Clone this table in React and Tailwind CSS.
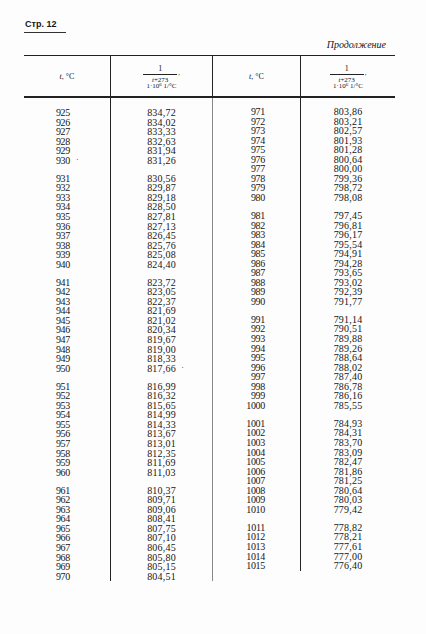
import React from "react";

const left = [
  [["925","834,72"],["926","834,02"],["927","833,33"],["928","832,63"],["929","831,94"],["930","831,26"]],
  [["931","830,56"],["932","829,87"],["933","829,18"],["934","828,50"],["935","827,81"],["936","827,13"],["937","826,45"],["938","825,76"],["939","825,08"],["940","824,40"]],
  [["941","823,72"],["942","823,05"],["943","822,37"],["944","821,69"],["945","821,02"],["946","820,34"],["947","819,67"],["948","819,00"],["949","818,33"],["950","817,66"]],
  [["951","816,99"],["952","816,32"],["953","815,65"],["954","814,99"],["955","814,33"],["956","813,67"],["957","813,01"],["958","812,35"],["959","811,69"],["960","811,03"]],
  [["961","810,37"],["962","809,71"],["963","809,06"],["964","808,41"],["965","807,75"],["966","807,10"],["967","806,45"],["968","805,80"],["969","805,15"],["970","804,51"]],
];

const right = [
  [["971","803,86"],["972","803,21"],["973","802,57"],["974","801,93"],["975","801,28"],["976","800,64"],["977","800,00"],["978","799,36"],["979","798,72"],["980","798,08"]],
  [["981","797,45"],["982","796,81"],["983","796,17"],["984","795,54"],["985","794,91"],["986","794,28"],["987","793,65"],["988","793,02"],["989","792,39"],["990","791,77"]],
  [["991","791,14"],["992","790,51"],["993","789,88"],["994","789,26"],["995","788,64"],["996","788,02"],["997","787,40"],["998","786,78"],["999","786,16"],["1000","785,55"]],
  [["1001","784,93"],["1002","784,31"],["1003","783,70"],["1004","783,09"],["1005","782,47"],["1006","781,86"],["1007","781,25"],["1008","780,64"],["1009","780,03"],["1010","779,42"]],
  [["1011","778,82"],["1012","778,21"],["1013","777,61"],["1014","777,00"],["1015","776,40"]],
];

function Half({ groups, first, second, tPad, topClass, dotT, dotV }) {
  return (
    <div className="flex flex-col">
      <div className={`grid ${first} ${topClass}`}>
        <div className="border-r border-[#222]"></div>
        <div className={second}></div>
      </div>
      {groups.map((g, gi) => (
        <React.Fragment key={gi}>
          {gi > 0 && (
            <div className={`grid ${first} h-[8.5px]`}>
              <div className="border-r border-[#222]"></div>
              <div className={second}></div>
            </div>
          )}
          {g.map((r) => (
            <div key={r[0]} className={`grid ${first} h-[9.55px] leading-[9.55px]`}>
              <div className={`border-r border-[#222] text-right ${tPad}`}>
                <span className="relative">
                  {r[0]}
                  {dotT === r[0] && (
                    <span className="absolute left-[20px] top-0 text-[8px]">·</span>
                  )}
                </span>
              </div>
              <div className={`${second} text-center tracking-[0.2px]`}>
                <span className="relative">
                  {r[1]}
                  {dotV === r[1] && (
                    <span className="absolute left-[34px] top-0 text-[8px]">·</span>
                  )}
                </span>
              </div>
            </div>
          ))}
        </React.Fragment>
      ))}
    </div>
  );
}

function TempHead() {
  return (
    <div className="flex items-center justify-center text-[8px] mt-[1px]">
      <span className="italic">t</span>
      <span>, °C</span>
    </div>
  );
}

function FracHead() {
  return (
    <div className="flex flex-col items-center justify-center text-[7px] mt-[2px]">
      <div className="flex items-end">
        <div className="flex flex-col items-center">
          <span className="text-[8px] leading-[7px] mb-[2px]">1</span>
          <div className="w-[34px] border-t border-[#222]"></div>
          <span className="leading-[6.5px] mt-[2px]"><span className="italic">t</span>+273</span>
        </div>
        <span className="leading-[6px] mb-[7px] ml-[1px]">,</span>
      </div>
      <span className="leading-[6.5px]">
        1·10<span className="text-[5px] align-top leading-[4px]">6</span> 1/°C
      </span>
    </div>
  );
}

export default function App() {
  return (
    <div
      className="w-[426px] h-[634px] bg-[#fdfdfd] text-[#161616] overflow-hidden"
      style={{ fontFamily: '"Liberation Serif", "Times New Roman", serif' }}
    >
      <div className="pt-[19px] pl-[24px]">
        <div
          className="w-[42px] border-b border-[#333] pb-[2px] pl-[1px] text-[9px] font-bold leading-[11px]"
          style={{ fontFamily: '"Liberation Sans", Arial, sans-serif' }}
        >
          Стр. 12
        </div>
      </div>
      <div className="flex justify-end pr-[40px] mt-[6px] text-[10px] italic leading-[12px]">
        Продолжение
      </div>
      <div className="ml-[24px] mt-[4px] w-[371px]">
        <div className="grid grid-cols-[87px_102px_88px_94px] h-[43px] border-t-[1.5px] border-b-[2px] border-[#222]">
          <div className="border-r border-[#222] flex items-center justify-center"><TempHead /></div>
          <div className="border-r border-[#222] flex items-center justify-center"><FracHead /></div>
          <div className="border-r border-[#222] flex items-center justify-center"><TempHead /></div>
          <div className="flex items-center justify-center"><FracHead /></div>
        </div>
        <div className="flex items-start text-[10px] tracking-[-0.3px]">
          <div className="w-[189px]">
            <Half
              groups={left}
              first="grid-cols-[87px_102px]"
              second="border-r border-[#888]"
              tPad="pr-[40px]"
              topClass="h-[10px]"
              dotT="930"
              dotV="817,66"
            />
          </div>
          <div className="w-[182px]">
            <Half
              groups={right}
              first="grid-cols-[88px_94px]"
              second=""
              tPad="pr-[35px]"
              topClass="h-[9px]"
            />
          </div>
        </div>
      </div>
    </div>
  );
}
